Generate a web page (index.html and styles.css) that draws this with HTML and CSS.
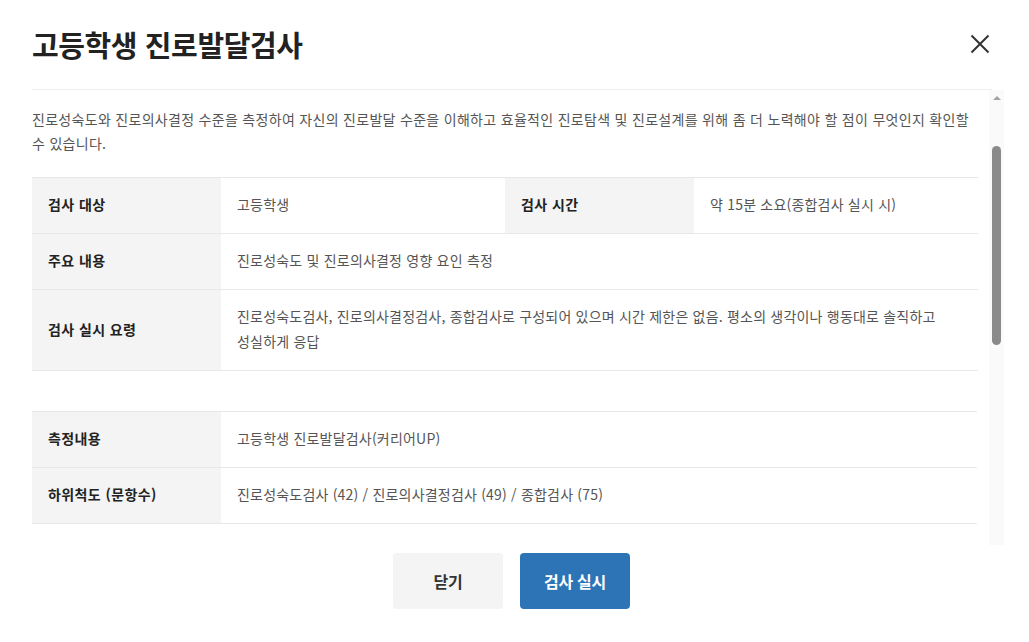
FILE: index.html
```html
<!DOCTYPE html>
<html lang="ko">
<head>
<meta charset="utf-8">
<title>고등학생 진로발달검사</title>
<link rel="stylesheet" href="styles.css">
</head>
<body>
<div class="modal">
  <header class="modal-header">
    <h1 class="modal-title">고등학생 진로발달검사</h1>
    <button class="close-btn" type="button" aria-label="닫기">
      <svg width="20" height="20" viewBox="0 0 20 20"><path d="M1.5 1.5 L18.5 18.5 M18.5 1.5 L1.5 18.5" stroke="#333" stroke-width="2" fill="none"/></svg>
    </button>
  </header>
  <div class="modal-body">
    <div class="scroll-view">
      <p class="desc">진로성숙도와 진로의사결정 수준을 측정하여 자신의 진로발달 수준을 이해하고 효율적인 진로탐색 및 진로설계를 위해 좀 더 노력해야 할 점이 무엇인지 확인할 수 있습니다.</p>
      <table class="info-table">
        <colgroup><col class="c-th"><col class="c-td"><col class="c-th"><col class="c-td"></colgroup>
        <tr><th>검사 대상</th><td>고등학생</td><th>검사 시간</th><td>약 15분 소요(종합검사 실시 시)</td></tr>
        <tr><th>주요 내용</th><td colspan="3">진로성숙도 및 진로의사결정 영향 요인 측정</td></tr>
        <tr><th>검사 실시 요령</th><td colspan="3">진로성숙도검사, 진로의사결정검사, 종합검사로 구성되어 있으며 시간 제한은 없음. 평소의 생각이나 행동대로 솔직하고 성실하게 응답</td></tr>
      </table>
      <table class="info-table second">
        <colgroup><col class="c-th"><col></colgroup>
        <tr><th>측정내용</th><td>고등학생 진로발달검사(커리어UP)</td></tr>
        <tr><th>하위척도 (문항수)</th><td>진로성숙도검사 (42) / 진로의사결정검사 (49) / 종합검사 (75)</td></tr>
      </table>
    </div>
    <div class="scrollbar" aria-hidden="true">
      <span class="scroll-arrow"></span>
      <span class="scroll-thumb"></span>
    </div>
  </div>
  <footer class="modal-footer">
    <button class="btn btn-gray" type="button">닫기</button>
    <button class="btn btn-blue" type="button">검사 실시</button>
  </footer>
</div>
</body>
</html>
```

FILE: styles.css
```css
* { box-sizing: border-box; }
html, body { margin: 0; padding: 0; background: #fff; }
body {
  font-family: "Noto Sans CJK KR", "Noto Sans", sans-serif;
  color: #333;
  word-break: keep-all;
}
.modal {
  width: 1029px;
  height: 642px;
  display: flex;
  flex-direction: column;
}
.modal-header {
  margin: 0 37px 0 32px;
  height: 90px;
  border-bottom: 1px solid #eeeeee;
  display: flex;
  align-items: center;
  justify-content: space-between;
  padding-bottom: 1px;
}
.modal-title {
  margin: 0;
  font-size: 29px;
  font-weight: 700;
  letter-spacing: -0.4px;
  color: #222;
}
.close-btn {
  border: 0;
  background: none;
  padding: 0;
  margin-right: 2px;
  width: 20px;
  height: 20px;
  display: flex;
  cursor: pointer;
}
.modal-body {
  margin-left: 32px;
  width: 972px;
  height: 455px;
  display: flex;
  flex: none;
}
.scroll-view {
  flex: 1;
  overflow-y: auto;
  scrollbar-width: none;
  padding: 17px 12px 0 0;
}
.scrollbar {
  width: 15px;
  flex: none;
  background: #fafafa;
  display: flex;
  flex-direction: column;
  align-items: center;
}
.scroll-arrow {
  margin-top: 6px;
  width: 0;
  height: 0;
  border-left: 4px solid transparent;
  border-right: 4px solid transparent;
  border-bottom: 4px solid #a3a3a3;
}
.scroll-thumb {
  margin-top: 46px;
  width: 9px;
  height: 199px;
  border-radius: 5px;
  background: #8a8a8a;
}
.desc {
  margin: 0;
  font-size: 14px;
  line-height: 24px;
  letter-spacing: 0.3px;
  color: #555;
}
.info-table {
  margin-top: 22px;
  width: 100%;
  border-collapse: collapse;
  table-layout: fixed;
  border-top: 1px solid #e6e6e6;
}
.info-table.second { margin-top: 40px; }
.c-th { width: 189px; }
.c-td { width: 284px; }
.info-table th,
.info-table td {
  padding: 14px 16px 16px;
  font-size: 14px;
  line-height: 25px;
  text-align: left;
  vertical-align: middle;
  border-bottom: 1px solid #e8e8e8;
}
.info-table th {
  background: #f4f4f4;
  font-weight: 700;
  letter-spacing: 0.4px;
  color: #222;
}
.info-table td {
  font-weight: 400;
  letter-spacing: 0.2px;
  color: #555;
}
.modal-footer {
  display: flex;
  justify-content: center;
  gap: 17px;
  padding: 8px 6px 0 0;
}
.btn {
  width: 110px;
  height: 56px;
  border: 0;
  border-radius: 4px;
  font-family: inherit;
  font-size: 16px;
  font-weight: 700;
  letter-spacing: -0.3px;
  cursor: pointer;
}
.btn-gray { background: #f4f4f4; color: #333; }
.btn-blue { background: #2c74b5; color: #fff; }
```
